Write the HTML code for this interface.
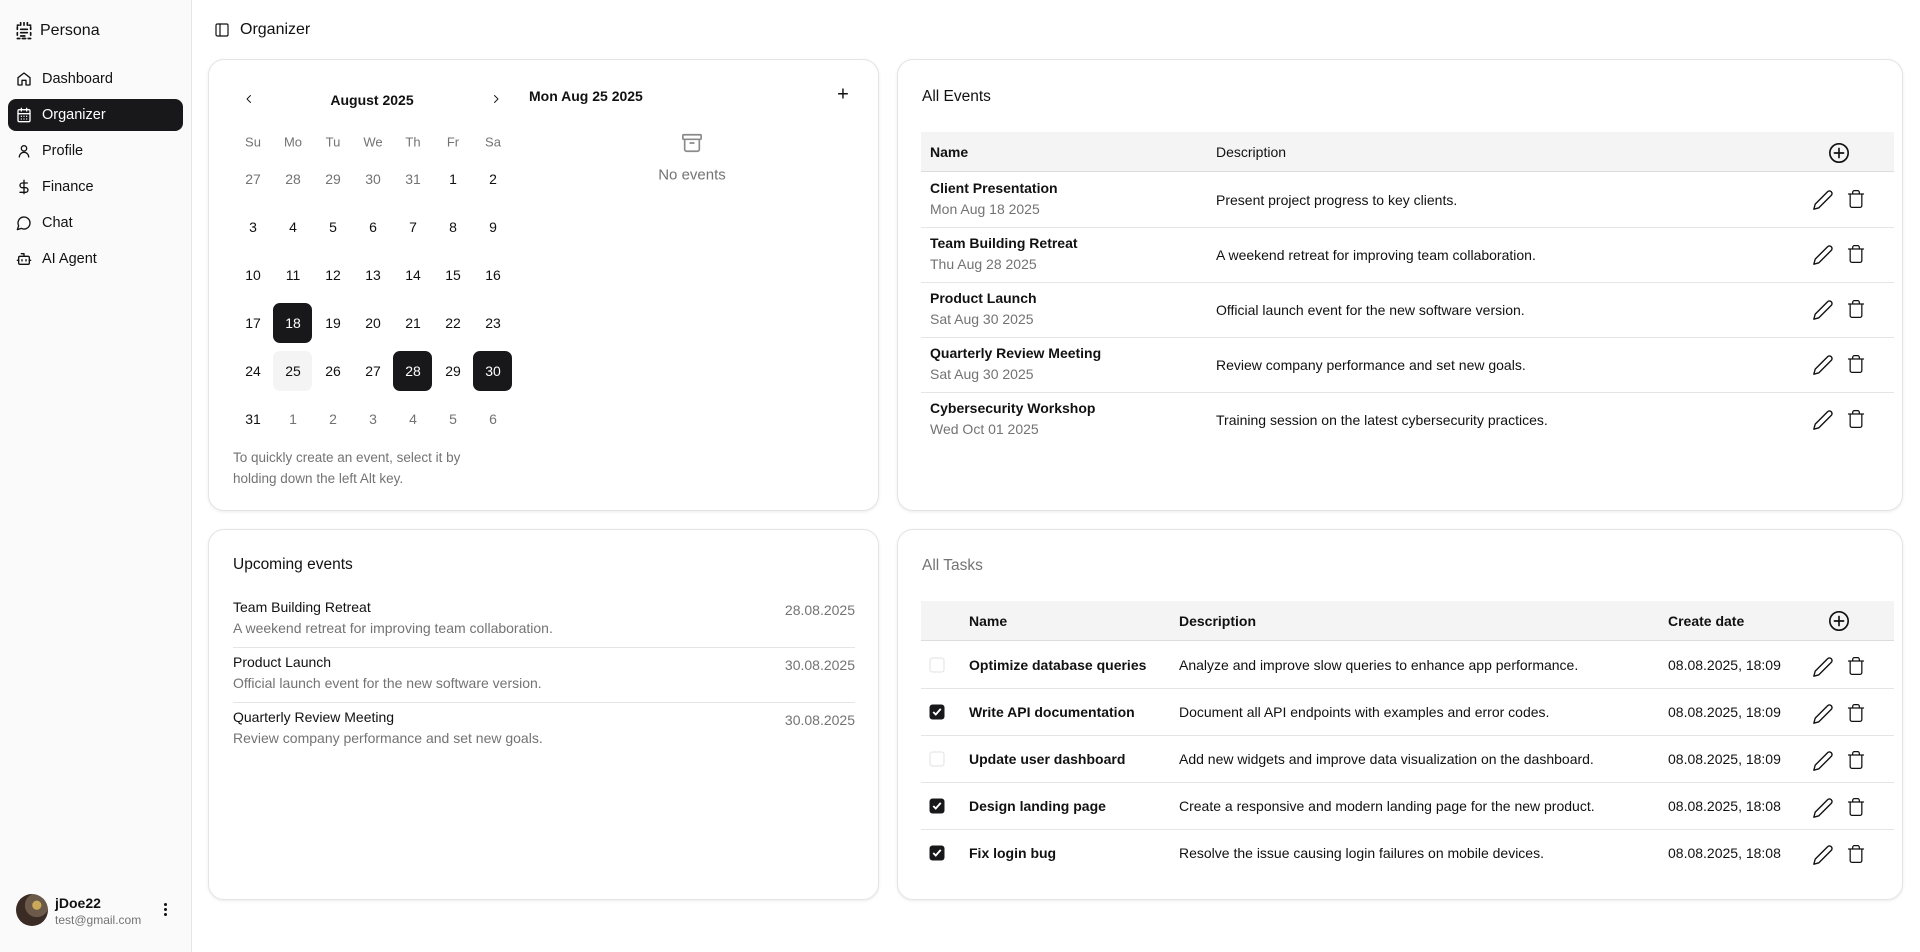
<!DOCTYPE html>
<html><head><meta charset="utf-8"><style>
*{box-sizing:border-box;margin:0;padding:0}
body{width:1920px;height:952px;overflow:hidden;background:#fff;font-family:"Liberation Sans",sans-serif;color:#111;font-size:14px;position:relative}
.abs{position:absolute}
.side{position:absolute;left:0;top:0;width:192px;height:952px;background:#fafafa;border-right:1px solid #e6e6e6}
.nav{position:absolute;left:8px;width:175px;height:32px;border-radius:8px;display:flex;align-items:center;padding-left:8px;font-size:14.5px;color:#111}
.nav svg{width:16px;height:16px;margin-right:10px;fill:none;stroke:currentColor;stroke-width:2;stroke-linecap:round;stroke-linejoin:round}
.nav.act{background:#18181b;color:#fff}
.card{position:absolute;border:1px solid #e4e4e4;border-radius:16px;background:#fff;box-shadow:0 1px 3px rgba(0,0,0,.08)}
.c{position:absolute;transform:translate(-50%,-50%);white-space:nowrap}
.l{position:absolute;transform:translateY(-50%);white-space:nowrap}
.g{color:#737373}
.b{font-weight:bold}
.sel{position:absolute;width:39px;height:40px;border-radius:7px;background:#18181b}
.ico{fill:none;stroke:#111;stroke-width:1.8;stroke-linecap:round;stroke-linejoin:round}
.thin{stroke-width:1.5}
.hl{position:absolute;height:1px;background:#e5e5e5}
.cb{position:absolute;width:15px;height:15px;border-radius:3px;transform:translate(-50%,-50%)}
.cb.on{background:#18181b}
.cb.off{border:1px solid #e0e0e0}
</style></head><body>
<div class="side">
  <svg class="abs" style="left:14px;top:21px" width="20" height="20" viewBox="0 0 24 24" fill="none" stroke="#111" stroke-width="2" stroke-linecap="round"><path d="M8 2v3M12 2v3M16 2v3M4 7v3M4 14v3M20 7v3M20 14v3M4 5h2M18 5h2M4 21h3M10 21h4M17 21h3M8 10h8M8 14h8M8 18h5"/></svg>
  <div class="l" style="left:40px;top:31px;font-size:16px">Persona</div>
  <div class="nav" style="top:63px"><svg viewBox="0 0 24 24"><path d="M3 10l9-7 9 7v10a1 1 0 0 1-1 1h-5v-7H9v7H4a1 1 0 0 1-1-1z"/></svg>Dashboard</div>
  <div class="nav act" style="top:99px"><svg viewBox="0 0 24 24"><rect x="3" y="4" width="18" height="18" rx="2"/><path d="M16 2v4M8 2v4M3 10h18M8 14h.01M12 14h.01M16 14h.01M8 18h.01M12 18h.01M16 18h.01"/></svg>Organizer</div>
  <div class="nav" style="top:135px"><svg viewBox="0 0 24 24"><circle cx="12" cy="8" r="4"/><path d="M5 21a7 7 0 0 1 14 0"/></svg>Profile</div>
  <div class="nav" style="top:171px"><svg viewBox="0 0 24 24"><path d="M12 2v20M17 6H9.5a3.5 3.5 0 0 0 0 7h5a3.5 3.5 0 0 1 0 7H6"/></svg>Finance</div>
  <div class="nav" style="top:207px"><svg viewBox="0 0 24 24"><path d="M7.9 20A9 9 0 1 0 4 16.1L2 22z"/></svg>Chat</div>
  <div class="nav" style="top:243px"><svg viewBox="0 0 24 24"><path d="M12 8V4H8"/><rect x="4" y="8" width="16" height="12" rx="2"/><path d="M2 14h2M20 14h2M15 13v2M9 13v2"/></svg>AI Agent</div>
  <div class="abs" style="left:16px;top:894px;width:32px;height:32px;border-radius:50%;background:radial-gradient(circle at 65% 35%,#c9a85a 0 15%,#6b5a4a 16% 40%,#3a2c24 41%)"></div>
  <div class="l b" style="left:55px;top:903px;font-size:14px">jDoe22</div>
  <div class="l g" style="left:55px;top:920px;font-size:12px">test@gmail.com</div>
  <div class="abs" style="left:164px;top:903px;width:3px;height:3px;border-radius:50%;background:#111;box-shadow:0 5px 0 #111,0 10px 0 #111"></div>
</div>
<svg class="abs ico" style="left:214px;top:22px" width="16" height="16" viewBox="0 0 24 24"><rect x="3" y="3" width="18" height="18" rx="2"/><path d="M9 3v18"/></svg>
<div class="l" style="left:240px;top:30px;font-size:16px">Organizer</div>

<div class="card" style="left:208px;top:59px;width:671px;height:452px"></div>
<svg class="abs ico" style="left:243px;top:93px" width="12" height="12" viewBox="0 0 24 24"><path d="M15 5l-7 7 7 7"/></svg>
<svg class="abs ico" style="left:490px;top:93px" width="12" height="12" viewBox="0 0 24 24"><path d="M9 5l7 7-7 7"/></svg>
<div class="c b" style="left:372px;top:100px">August 2025</div>
<div id="cal"></div>
<div class="abs g" style="left:233px;top:447px;line-height:21px;font-size:13.5px">To quickly create an event, select it by<br>holding down the left Alt key.</div>
<div class="l b" style="left:529px;top:96px">Mon Aug 25 2025</div>
<div class="c" style="left:843px;top:95px;font-size:20px">+</div>
<svg class="abs" style="left:681px;top:132px" width="22" height="22" viewBox="0 0 24 24" fill="none" stroke="#8a8a8a" stroke-width="1.8" stroke-linecap="round"><rect x="2" y="3" width="20" height="5" rx="1"/><path d="M4 8v11a2 2 0 0 0 2 2h12a2 2 0 0 0 2-2V8M10 12h4"/></svg>
<div class="c g" style="left:692px;top:175px;font-size:15px">No events</div>

<div class="card" style="left:897px;top:59px;width:1006px;height:452px"></div>
<div class="l" style="left:922px;top:97px;font-size:15.5px">All Events</div>
<div class="abs" style="left:921px;top:132px;width:973px;height:40px;background:#f4f4f4;border-bottom:1px solid #ddd"></div>
<div class="l b" style="left:930px;top:152px;font-weight:600">Name</div>
<div class="l" style="left:1216px;top:152px">Description</div>
<svg class="abs ico" style="left:1828px;top:142px" width="22" height="22" viewBox="0 0 24 24"><circle cx="12" cy="12" r="10"/><path d="M12 7v10M7 12h10"/></svg>
<div id="ev"></div>

<div class="card" style="left:208px;top:529px;width:671px;height:371px"></div>
<div class="l" style="left:233px;top:565px;font-size:15.5px">Upcoming events</div>
<div id="up"></div>

<div class="card" style="left:897px;top:529px;width:1006px;height:371px"></div>
<div class="l g" style="left:922px;top:566px;font-size:15.5px">All Tasks</div>
<div class="abs" style="left:921px;top:601px;width:973px;height:40px;background:#f4f4f4;border-bottom:1px solid #ddd"></div>
<div class="l b" style="left:969px;top:621px">Name</div>
<div class="l b" style="left:1179px;top:621px">Description</div>
<div class="l b" style="left:1668px;top:621px">Create date</div>
<svg class="abs ico" style="left:1828px;top:610px" width="22" height="22" viewBox="0 0 24 24"><circle cx="12" cy="12" r="10"/><path d="M12 7v10M7 12h10"/></svg>
<div id="tk"></div>
<script>
var h='',cols=[253,293,333,373,413,453,493],rows=[179,227,275,323,371,419];
['Su','Mo','Tu','We','Th','Fr','Sa'].forEach((d,i)=>h+=`<div class="c g" style="left:${cols[i]}px;top:142px;font-size:13px">${d}</div>`);
var days=[27,28,29,30,31,1,2];for(var i=3;i<=31;i++)days.push(i);days.push(1,2,3,4,5,6);
days.forEach((d,k)=>{var r=Math.floor(k/7),c=k%7,x=cols[c],y=rows[r];var gray=(r==0&&c<5)||(r==5&&c>0);var sel=(r==3&&c==1)||(r==4&&(c==4||c==6));
if(r==4&&c==1)h+=`<div class="sel" style="left:${x-20}px;top:${y-20}px;background:#f4f4f4"></div>`;
if(sel)h+=`<div class="sel" style="left:${x-20}px;top:${y-20}px"></div>`;
h+=`<div class="c${gray?' g':''}" style="left:${x}px;top:${y}px;${sel?'color:#fff':''}">${d}</div>`});
document.getElementById('cal').innerHTML=h;
function act(y){return `<svg class="abs ico thin" style="left:1812px;top:${y-11}px" width="22" height="22" viewBox="0 0 24 24"><path d="M17 3a2.8 2.8 0 1 1 4 4L7.5 20.5 2 22l1.5-5.5Z"/></svg><svg class="abs ico thin" style="left:1846px;top:${y-12}px" width="20" height="22" viewBox="0 0 24 24"><path d="M3 6h18M19 6v14a2 2 0 0 1-2 2H7a2 2 0 0 1-2-2V6M8 6V4a2 2 0 0 1 2-2h4a2 2 0 0 1 2 2v2"/></svg>`}
var ev=[['Client Presentation','Mon Aug 18 2025','Present project progress to key clients.'],['Team Building Retreat','Thu Aug 28 2025','A weekend retreat for improving team collaboration.'],['Product Launch','Sat Aug 30 2025','Official launch event for the new software version.'],['Quarterly Review Meeting','Sat Aug 30 2025','Review company performance and set new goals.'],['Cybersecurity Workshop','Wed Oct 01 2025','Training session on the latest cybersecurity practices.']];
h='';ev.forEach((e,i)=>{var y=200+55*i;h+=`<div class="l b" style="left:930px;top:${y-12}px">${e[0]}</div><div class="l g" style="left:930px;top:${y+9}px">${e[1]}</div><div class="l" style="left:1216px;top:${y}px">${e[2]}</div>`+act(y);if(i<4)h+=`<div class="hl" style="left:921px;top:${y+27}px;width:973px"></div>`});
document.getElementById('ev').innerHTML=h;
var up=[['Team Building Retreat','A weekend retreat for improving team collaboration.','28.08.2025'],['Product Launch','Official launch event for the new software version.','30.08.2025'],['Quarterly Review Meeting','Review company performance and set new goals.','30.08.2025']];
h='';up.forEach((e,i)=>{var y=607+55*i;h+=`<div class="l" style="left:233px;top:${y}px">${e[0]}</div><div class="l g" style="left:233px;top:${y+21}px">${e[1]}</div><div class="l g" style="right:1065px;top:${y+3}px">${e[2]}</div>`;if(i<2)h+=`<div class="hl" style="left:233px;top:${y+40}px;width:622px"></div>`});
document.getElementById('up').innerHTML=h;
var tk=[[0,'Optimize database queries','Analyze and improve slow queries to enhance app performance.','08.08.2025, 18:09'],[1,'Write API documentation','Document all API endpoints with examples and error codes.','08.08.2025, 18:09'],[0,'Update user dashboard','Add new widgets and improve data visualization on the dashboard.','08.08.2025, 18:09'],[1,'Design landing page','Create a responsive and modern landing page for the new product.','08.08.2025, 18:08'],[1,'Fix login bug','Resolve the issue causing login failures on mobile devices.','08.08.2025, 18:08']];
h='';tk.forEach((e,i)=>{var y=665+47*i;h+=`<div class="cb ${e[0]?'on':'off'}" style="left:937px;top:${y}px">${e[0]?'<svg width="15" height="15" viewBox="0 0 24 24" fill="none" stroke="#fff" stroke-width="3"><path d="M6 12l4 4 8-9"/></svg>':''}</div><div class="l b" style="left:969px;top:${y}px">${e[1]}</div><div class="l" style="left:1179px;top:${y}px">${e[2]}</div><div class="l" style="left:1668px;top:${y}px">${e[3]}</div>`+act(y+2);if(i<4)h+=`<div class="hl" style="left:921px;top:${y+23}px;width:973px"></div>`});
document.getElementById('tk').innerHTML=h;
</script>
</body></html>
